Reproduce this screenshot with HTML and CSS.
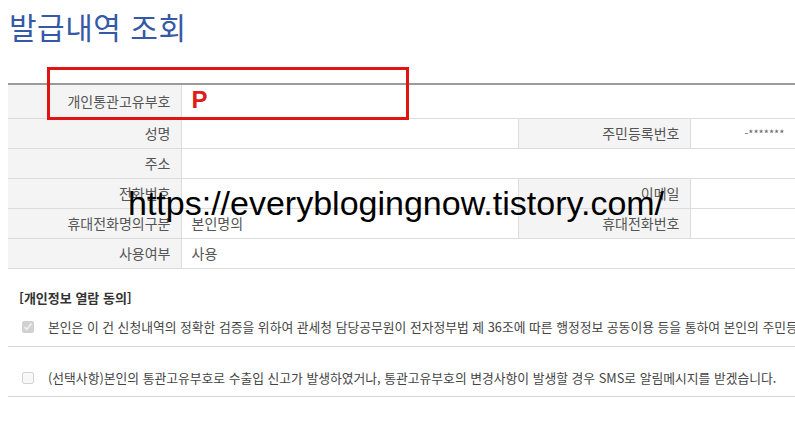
FILE: index.html
```html
<!DOCTYPE html>
<html lang="ko">

<head>
    <meta charset="UTF-8">
    <meta name="viewport" content="width=device-width, initial-scale=1.0">
    <title>발급내역 조회</title>
    <link rel="stylesheet" href="styles.css">
</head>

<body>
    <div class="page">
        <h1>발급내역 조회</h1>

        <table class="info">
            <colgroup>
                <col class="col-label">
                <col class="col-value">
                <col class="col-label2">
                <col class="col-value2">
            </colgroup>
            <tr class="first">
                <th>개인통관고유부호</th>
                <td colspan="3"><span class="code">P</span></td>
            </tr>
            <tr>
                <th>성명</th>
                <td></td>
                <th>주민등록번호</th>
                <td class="rrn">-*******</td>
            </tr>
            <tr>
                <th>주소</th>
                <td colspan="3"></td>
            </tr>
            <tr>
                <th>전화번호</th>
                <td></td>
                <th>이메일</th>
                <td></td>
            </tr>
            <tr>
                <th>휴대전화명의구분</th>
                <td>본인명의</td>
                <th>휴대전화번호</th>
                <td></td>
            </tr>
            <tr>
                <th>사용여부</th>
                <td colspan="3">사용</td>
            </tr>
        </table>

        <div class="consent">
            <h3>[개인정보 열람 동의]</h3>
            <div class="agree-row first-row">
                <input type="checkbox" checked disabled>
                <span>본인은 이 건 신청내역의 정확한 검증을 위하여 관세청 담당공무원이 전자정부법 제 36조에 따른 행정정보 공동이용 등을 통하여 본인의 주민등록표 등본을 확인하는 것에 동의합니다.</span>
            </div>
            <div class="agree-row">
                <input type="checkbox" disabled>
                <span>(선택사항)본인의 통관고유부호로 수출입 신고가 발생하였거나, 통관고유부호의 변경사항이 발생할 경우 SMS로 알림메시지를 받겠습니다.</span>
            </div>
        </div>

        <!-- highlight box and watermark drawn over the page -->
        <div class="highlight"></div>
        <div class="watermark">https://everyblogingnow.tistory.com/</div>
    </div>
</body>

</html>
```

FILE: styles.css
```css
* {
    margin: 0;
    padding: 0;
    box-sizing: border-box;
}

html,
body {
    width: 795px;
    height: 428px;
    overflow: hidden;
    background-color: #fff;
}

body {
    font-family: "Noto Sans CJK KR", "Noto Sans", sans-serif;
    font-size: 13px;
    color: #444;
}

.page {
    position: relative;
    padding: 8px 0 0 8px;
    width: 1100px;
}

h1 {
    font-size: 30px;
    font-weight: normal;
    color: #3559a6;
    line-height: 36px;
    margin-left: 1px;
    margin-bottom: 39px;
    letter-spacing: 0.5px;
}

.info {
    width: 1000px;
    border-collapse: collapse;
    table-layout: fixed;
    border-top: 2px solid #9a9a9a;
}

.col-label {
    width: 173px;
}

.col-value {
    width: 337px;
}

.col-label2 {
    width: 172px;
}

.info tr {
    height: 30px;
    border-bottom: 1px solid #dcdcdc;
}

.info tr.first {
    height: 34px;
}

.info th,
.info td {
    font-weight: normal;
    font-size: 14px;
    padding: 0 10px;
    white-space: nowrap;
    line-height: 18px;
}

.info th {
    background-color: #f4f4f4;
    color: #555;
    text-align: right;
    border-right: 1px solid #dcdcdc;
}

.info td {
    color: #555;
    text-align: left;
    border-right: 1px solid #dcdcdc;
}

.info td.rrn {
    padding-left: 54px;
    color: #666;
    font-size: 11px;
}

.code {
    font-family: "Liberation Sans", Arial, sans-serif;
    font-weight: bold;
    font-size: 24px;
    color: #e01b1b;
}

.consent {
    margin-top: 19px;
    width: 1000px;
}

.consent h3 {
    font-size: 13px;
    font-weight: bold;
    color: #333;
    line-height: 20px;
    padding-left: 11px;
}

.agree-row {
    display: flex;
    align-items: center;
    padding: 21px 0 8px 0;
    line-height: 20px;
    font-size: 12.8px;
    border-bottom: 1px solid #d6d6d6;
    white-space: nowrap;
    color: #444;
}

.agree-row.first-row {
    padding: 9px 0 9px 0;
}

.agree-row input {
    width: 12px;
    height: 12px;
    margin: 0 14px 0 14px;
    flex: none;
}

.highlight {
    position: absolute;
    left: 47px;
    top: 67px;
    width: 362px;
    height: 53px;
    border: 3px solid #e11414;
}

.watermark {
    position: absolute;
    left: 128px;
    top: 184px;
    font-family: "Liberation Sans", Arial, sans-serif;
    font-size: 34px;
    color: #000;
    white-space: nowrap;
}
```
